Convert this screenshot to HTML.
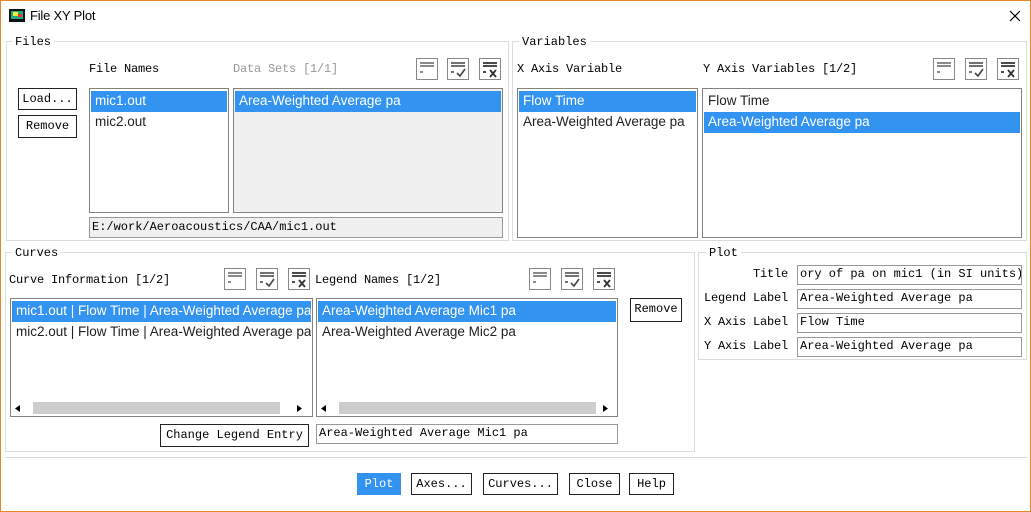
<!DOCTYPE html>
<html><head><meta charset="utf-8"><style>
*{box-sizing:border-box;margin:0;padding:0}
body{width:1031px;height:512px;background:#fff;position:relative;overflow:hidden;font-family:"Liberation Mono","Noto Sans CJK SC",monospace;font-size:12px;color:#000}
.win{position:absolute;left:0;top:0;width:1031px;height:512px;border:1px solid #e8862a}
.a{position:absolute}
.g{position:absolute;border:1px solid #dcdcdc}
.gl{position:absolute;background:#fff;padding:0 3px;font-size:12px;line-height:14px}
.lb{position:absolute;font-size:12px;line-height:14px;white-space:nowrap;letter-spacing:-0.2px}
.list{position:absolute;border:1px solid #828282;background:#fff;overflow:hidden;font-family:"Liberation Sans",sans-serif;font-size:13.5px}
.row{height:21px;line-height:20px;padding-left:4px;white-space:nowrap;color:#222;margin:0 1px;overflow:hidden}
.sel{background:#3393f0;color:#fff}
.btn{position:absolute;border:1px solid #222;background:#fff;text-align:center;font-size:12px;line-height:20px;white-space:nowrap}
.fld{position:absolute;border:1px solid #999;background:#fff;font-size:12px;line-height:17px;padding-left:2px;white-space:nowrap;overflow:hidden}
.ic{position:absolute;width:23px;height:23px}
.sb{position:absolute;left:1px;right:1px;bottom:1px;height:14px;background:#fff}
</style></head><body><div class="win"></div>
<svg class="a" style="left:9px;top:9px" width="16" height="13"><rect width="16" height="13" fill="#111"/><rect x="2" y="2" width="12" height="8" fill="#2a8"/><rect x="4" y="3" width="5" height="4" fill="#ee3"/><rect x="9" y="5" width="4" height="3" fill="#e33"/></svg>
<div class="lb" style="left:30px;top:9px;font-family:'Liberation Sans',sans-serif;font-size:13px">File XY Plot</div>
<svg class="a" style="left:1009px;top:10px" width="12" height="12"><path d="M1 1L11 11M11 1L1 11" stroke="#000" stroke-width="1.2"/></svg>

<!-- Files -->
<div class="g" style="left:6px;top:41px;width:503px;height:200px"></div><div class="gl" style="left:12px;top:35px">Files</div>
<div class="lb" style="left:89px;top:62px">File Names</div>
<div class="lb" style="left:233px;top:62px;color:#999">Data Sets [1/1]</div>
<div class="btn" style="left:18px;top:88px;width:59px;height:22px">Load...</div>
<div class="btn" style="left:18px;top:115px;width:59px;height:23px">Remove</div>
<div class="list" style="left:89px;top:88px;width:140px;height:125px;padding-top:2px"><div class="row sel">mic1.out</div><div class="row">mic2.out</div></div>
<div class="list" style="left:233px;top:88px;width:270px;height:125px;padding-top:2px;background:#f0f0f0"><div class="row sel">Area-Weighted Average pa</div></div>
<div class="fld" style="left:89px;top:217px;width:414px;height:21px;background:#f0f0f0;line-height:19px">E:/work/Aeroacoustics/CAA/mic1.out</div>

<!-- Variables -->
<div class="g" style="left:512px;top:41px;width:515px;height:200px"></div><div class="gl" style="left:519px;top:35px">Variables</div>
<div class="lb" style="left:517px;top:62px">X Axis Variable</div>
<div class="lb" style="left:703px;top:62px">Y Axis Variables [1/2]</div>
<div class="list" style="left:517px;top:88px;width:181px;height:150px;padding-top:2px"><div class="row sel">Flow Time</div><div class="row">Area-Weighted Average pa</div></div>
<div class="list" style="left:702px;top:88px;width:320px;height:150px;padding-top:2px"><div class="row">Flow Time</div><div class="row sel">Area-Weighted Average pa</div></div>

<!-- Curves -->
<div class="g" style="left:5px;top:252px;width:690px;height:200px"></div><div class="gl" style="left:12px;top:246px">Curves</div>
<div class="lb" style="left:9px;top:273px">Curve Information [1/2]</div>
<div class="lb" style="left:315px;top:273px">Legend Names [1/2]</div>
<div class="list" style="left:10px;top:298px;width:303px;height:119px;padding-top:2px"><div class="row sel">mic1.out | Flow Time | Area-Weighted Average pa</div><div class="row">mic2.out | Flow Time | Area-Weighted Average pa</div>
<div class="sb"><svg class="a" style="left:3px;top:4px" width="5" height="7"><path d="M5 0L0 3.5L5 7z"/></svg><div class="a" style="left:21px;top:1px;width:247px;height:12px;background:#cdcdcd"></div><svg class="a" style="left:285px;top:4px" width="5" height="7"><path d="M0 0L5 3.5L0 7z"/></svg></div></div>
<div class="list" style="left:316px;top:298px;width:302px;height:119px;padding-top:2px"><div class="row sel">Area-Weighted Average Mic1 pa</div><div class="row">Area-Weighted Average Mic2 pa</div>
<div class="sb"><svg class="a" style="left:3px;top:4px" width="5" height="7"><path d="M5 0L0 3.5L5 7z"/></svg><div class="a" style="left:21px;top:1px;width:257px;height:12px;background:#cdcdcd"></div><svg class="a" style="left:285px;top:4px" width="5" height="7"><path d="M0 0L5 3.5L0 7z"/></svg></div></div>
<div class="btn" style="left:630px;top:298px;width:52px;height:24px">Remove</div>
<div class="btn" style="left:160px;top:424px;width:149px;height:23px">Change Legend Entry</div>
<div class="fld" style="left:316px;top:424px;width:302px;height:20px">Area-Weighted Average Mic1 pa</div>

<!-- Plot -->
<div class="g" style="left:698px;top:252px;width:329px;height:108px"></div><div class="gl" style="left:706px;top:246px">Plot</div>
<div class="lb" style="left:700px;top:267px;width:88px;text-align:right">Title</div>
<div class="fld" style="left:797px;top:265px;width:225px;height:20px">ory of pa on mic1 (in SI units)</div>
<div class="lb" style="left:700px;top:291px;width:88px;text-align:right">Legend Label</div>
<div class="fld" style="left:797px;top:289px;width:225px;height:20px">Area-Weighted Average pa</div>
<div class="lb" style="left:700px;top:315px;width:88px;text-align:right">X Axis Label</div>
<div class="fld" style="left:797px;top:313px;width:225px;height:20px">Flow Time</div>
<div class="lb" style="left:700px;top:339px;width:88px;text-align:right">Y Axis Label</div>
<div class="fld" style="left:797px;top:337px;width:225px;height:20px">Area-Weighted Average pa</div>

<div class="a" style="left:5px;top:457px;width:1022px;height:1px;background:#d8d8d8"></div>
<div class="btn" style="left:357px;top:473px;width:44px;height:22px;background:#3393f0;border-color:#3393f0;color:#fff">Plot</div>
<div class="btn" style="left:411px;top:473px;width:61px;height:22px">Axes...</div>
<div class="btn" style="left:483px;top:473px;width:75px;height:22px">Curves...</div>
<div class="btn" style="left:569px;top:473px;width:51px;height:22px">Close</div>
<div class="btn" style="left:629px;top:473px;width:45px;height:22px">Help</div>

<svg width="0" height="0" style="position:absolute"><defs>
<g id="i0"><rect x=".5" y=".5" width="21" height="21" fill="#fff" stroke="#888"/><path d="M4 5H18M4 8H18M4 14H7" stroke="#444" stroke-width="1.2"/></g>
<g id="i1"><rect x=".5" y=".5" width="21" height="21" fill="#fff" stroke="#888"/><path d="M4 5H18M4 8H18M4 14H7M10 15L13 18L18 11" stroke="#444" stroke-width="1.6" fill="none"/></g>
<g id="i2"><rect x=".5" y=".5" width="21" height="21" fill="#fff" stroke="#888"/><path d="M4 5H18M4 8H18M4 14H7M11 12L17 19M17 12L11 19" stroke="#333" stroke-width="1.8" fill="none"/></g>
</defs></svg>
<svg class="ic" style="left:416px;top:58px"><use href="#i0"/></svg>
<svg class="ic" style="left:447px;top:58px"><use href="#i1"/></svg>
<svg class="ic" style="left:479px;top:58px"><use href="#i2"/></svg>
<svg class="ic" style="left:933px;top:58px"><use href="#i0"/></svg>
<svg class="ic" style="left:965px;top:58px"><use href="#i1"/></svg>
<svg class="ic" style="left:997px;top:58px"><use href="#i2"/></svg>
<svg class="ic" style="left:224px;top:268px"><use href="#i0"/></svg>
<svg class="ic" style="left:256px;top:268px"><use href="#i1"/></svg>
<svg class="ic" style="left:288px;top:268px"><use href="#i2"/></svg>
<svg class="ic" style="left:529px;top:268px"><use href="#i0"/></svg>
<svg class="ic" style="left:561px;top:268px"><use href="#i1"/></svg>
<svg class="ic" style="left:593px;top:268px"><use href="#i2"/></svg>
</body></html>
